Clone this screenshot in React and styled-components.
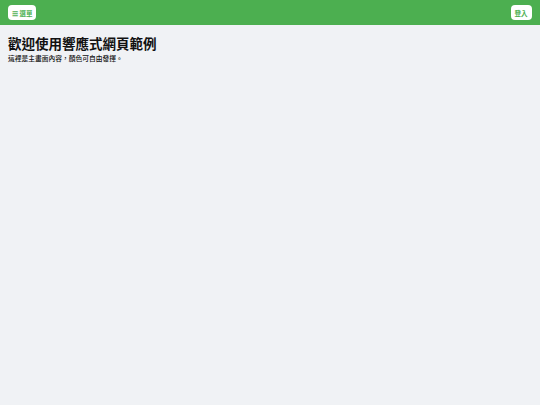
import React from "react";
import styled, { createGlobalStyle } from "styled-components";

const Global = createGlobalStyle`
  html, body { margin: 0; padding: 0; }
  body {
    background: #f0f2f5;
    font-family: "Noto Sans CJK TC", "Noto Sans", sans-serif;
    color: #111;
  }
`;

const Page = styled.div`
  min-height: 405px;
  background: #f0f2f5;
`;

const Header = styled.header`
  display: flex;
  align-items: center;
  justify-content: space-between;
  height: 25px;
  padding: 0 8.5px 0 8px;
  background: #4caf50;
  box-sizing: border-box;
`;

const HeaderButton = styled.button`
  display: flex;
  align-items: center;
  height: 15px;
  padding: 0 4px;
  border: none;
  border-radius: 4px;
  background: #fff;
  color: #4caf50;
  font-family: "Noto Sans CJK TC", sans-serif;
  font-size: 6.5px;
  font-weight: 700;
  white-space: pre;
  cursor: pointer;
`;

const Main = styled.main`
  padding: 9px 8px;
`;

const Title = styled.h1`
  margin: 0;
  font-size: 13.5px;
  font-weight: 700;
  line-height: 1.4;
  color: #111;
`;

const Subtitle = styled.p`
  margin: 1px 0 0;
  font-size: 6.75px;
  font-weight: 500;
  line-height: 1.4;
  color: #111;
`;

export default function App() {
  return (
    <>
      <Global />
      <Page>
        <Header>
          <HeaderButton>☰ 選單</HeaderButton>
          <HeaderButton>登入</HeaderButton>
        </Header>
        <Main>
          <Title>歡迎使用響應式網頁範例</Title>
          <Subtitle>這裡是主畫面內容，顏色可自由發揮。</Subtitle>
        </Main>
      </Page>
    </>
  );
}
